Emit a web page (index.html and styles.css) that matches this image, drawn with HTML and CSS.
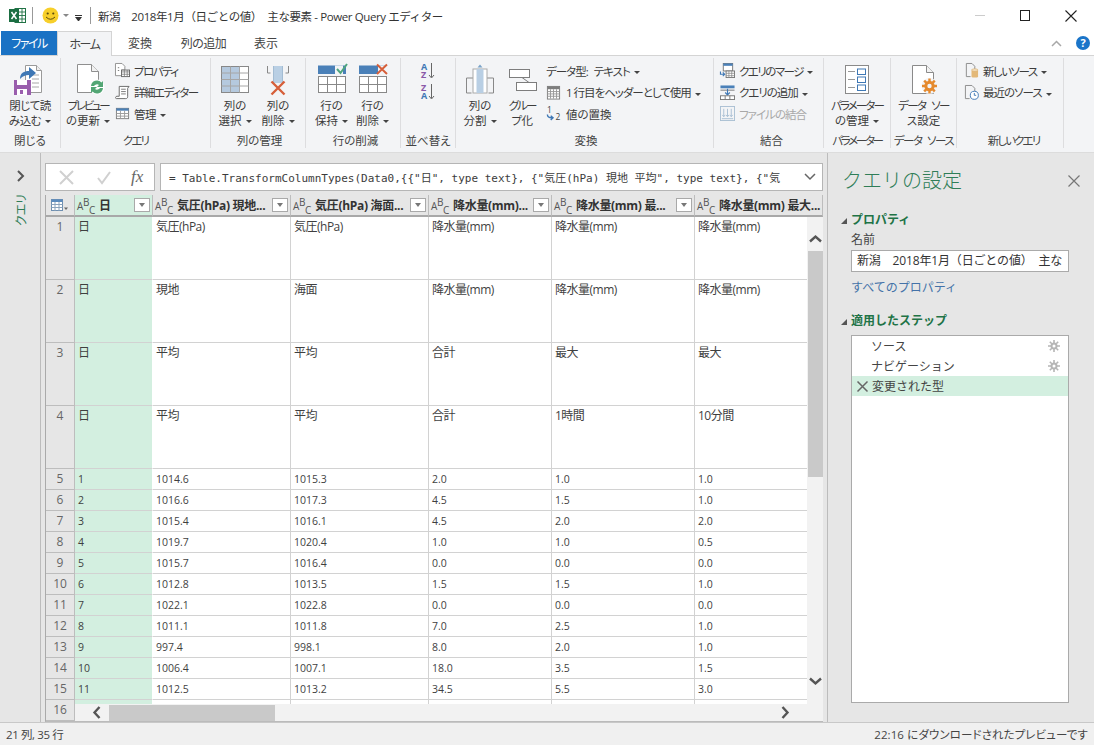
FILE: index.html
```html
<!DOCTYPE html>
<html lang="ja">
<head>
<meta charset="utf-8">
<title>Power Query エディター</title>
<link rel="stylesheet" href="styles.css">
</head>
<body>
<div class="app">
  <header class="titlebar">
    <svg class="tb-excel" width="17" height="17" viewBox="0 0 17 17"><rect x="6" y="1.5" width="10.5" height="14" fill="#fff" stroke="#217346"/><path d="M9 1.5v14M13 1.5v14M6 5h10M6 8.500h10M6 12h10" stroke="#217346" stroke-width=".9"/><rect x="0" y="2" width="10" height="13" fill="#1b6e42"/><path d="M2.500 5l5 7M7.500 5l-5 7" stroke="#fff" stroke-width="1.500"/></svg>
    <span class="tb-sep"></span>
    <svg class="tb-smile" width="17" height="17" viewBox="0 0 17 17"><circle cx="8.500" cy="8.500" r="8" fill="#f7cf2b"/><circle cx="5.700" cy="6.500" r="1.100" fill="#5a4a10"/><circle cx="11.300" cy="6.500" r="1.100" fill="#5a4a10"/><path d="M4 10q4.500 4.500 9 0" fill="none" stroke="#5a4a10" stroke-width="1"/></svg>
    <span class="caret caret-gray tb-c1"></span>
    <span class="tb-more"></span>
    <span class="tb-sep tb-sep2"></span>
    <span class="tb-title">新潟　2018年1月（日ごとの値）　主な要素 - Power Query エディター</span>
    <div class="winctl">
      <span class="win-min"></span>
      <span class="win-max"></span>
      <svg width="12" height="12" viewBox="0 0 12 12"><path d="M.5.500l11 11M11.500.500l-11 11" stroke="#222" stroke-width="1.100"/></svg>
    </div>
  </header>

  <nav class="tabs">
    <span class="tab tab-file ls15">ファイル</span>
    <span class="tab tab-home ls15">ホーム</span>
    <span class="tab tab-a">変換</span>
    <span class="tab tab-b ls05">列の追加</span>
    <span class="tab tab-c">表示</span>
    <div class="tabs-right">
      <svg width="11" height="7" viewBox="0 0 11 7"><path d="M1 6l4.500-4.500L10 6" fill="none" stroke="#a8a8a8" stroke-width="1.500"/></svg>
      <span class="help">?</span>
    </div>
  </nav>

  <section class="ribbon">
    <div class="group g-close">
      <div class="g-body">
        <div class="lg w60">
          <svg class="ico" viewBox="0 0 36 36"><path d="M13.500 3.500h11l5 5v22h-16z" fill="#fff" stroke="#9a9a9a"/><path d="M24.500 3.500v5h5" fill="#eee" stroke="#9a9a9a"/><path d="M20 13h7M20 17h7M20 21h7M20 25h7" stroke="#a8a8a8"/><rect x="2" y="18" width="17" height="15" fill="#9a5ead"/><rect x="5" y="18" width="10" height="5" fill="#fff"/><rect x="5" y="27" width="10" height="6" fill="#fff"/><rect x="8" y="28" width="3" height="4" fill="#9a5ead"/><path d="M8 17c0-6 4-8 9-8V5l7 6-7 6v-4c-4 0-6 1-9 4z" fill="#3f78b5"/></svg>
          <span class="lbl ls05">閉じて読<br>み込む<i class="caret"></i></span>
        </div>
      </div>
      <div class="g-name">閉じる</div>
    </div>

    <div class="group g-query">
      <div class="g-body">
        <div class="lg w55">
          <svg class="ico" viewBox="0 0 36 36"><path d="M7.500 2.500h14l7 7v21h-21z" fill="#fff" stroke="#8f8f8f"/><path d="M21.500 2.500v7h7" fill="#f2f2f2" stroke="#8f8f8f"/><circle cx="27" cy="25" r="7.500" fill="#fff"/><path d="M21 24a6 6 0 0 1 10.500-3.500l1.500-1.500v6h-6l2-2a3.500 3.500 0 0 0-5 1z" fill="#53a675"/><path d="M33 26a6 6 0 0 1-10.500 3.500L21 31v-6h6l-2 2a3.500 3.500 0 0 0 5-1z" fill="#53a675"/></svg>
          <span class="lbl"><span class="ls25">プレビュー</span><br>の更新<i class="caret"></i></span>
        </div>
        <div class="stack">
          <div class="sm"><svg class="sico" viewBox="0 0 16 16"><path d="M.5.500h7l3 3v4H7v6H.5z" fill="#fff" stroke="#8f8f8f"/><path d="M3 5h1.500M3 8h1.500" stroke="#777"/><rect x="7" y="7.500" width="8.500" height="7" fill="#fff" stroke="#666"/><path d="M7 9.500h8.500M7 12h8.500M10 7.500v7M13 7.500v7" stroke="#777" stroke-width=".8"/></svg><span class="ls15">プロパティ</span></div>
          <div class="sm"><svg class="sico" viewBox="0 0 16 16"><path d="M4.500 1.500h10.500l-1.500 2v9c0 1-.5 2-2 2H1.500c-1.500 0-1-2.500.5-2.500h2.500z" fill="#fff" stroke="#666"/><path d="M6.500 4.500h5M6.500 7h5M6.500 9.500h5" stroke="#777"/></svg><span class="ls15">詳細エディター</span></div>
          <div class="sm"><svg class="sico" viewBox="0 0 16 16"><rect x="1.500" y="2.500" width="13" height="11" fill="#fff" stroke="#7d7d7d"/><rect x="1.500" y="2.500" width="13" height="2.500" fill="#4a7fb5"/><path d="M1.500 8h13M1.500 10.800h13M5.800 5v8.500M10.200 5v8.500" stroke="#9a9a9a"/></svg><span class="ls05">管理<i class="caret"></i></span></div>
        </div>
      </div>
      <div class="g-name ls2">クエリ</div>
    </div>

    <div class="group g-cols">
      <div class="g-body">
        <div class="lg w42">
          <svg class="ico" viewBox="0 0 36 36"><rect x="4.500" y="4.500" width="27" height="26" fill="#fff" stroke="#888"/><rect x="5" y="5" width="17" height="25" fill="#b5c9de"/><path d="M4.500 11h27M4.500 17.500h27M4.500 24h27M13.500 4.500v26M22.500 4.500v26" stroke="#a6a6a6"/></svg>
          <span class="lbl">列の<br>選択<i class="caret"></i></span>
        </div>
        <div class="lg w42 ml1">
          <svg class="ico" viewBox="0 0 36 36"><path d="M7.500 4v7h3M28.500 4v7h-3" fill="none" stroke="#888"/><rect x="13.500" y="4" width="9" height="17" fill="#b9cfe4"/><path d="M13.500 4v17M22.500 4v17" stroke="#a3bcd3"/><path d="M11.500 19.500l13 13M24.500 19.500l-13 13" stroke="#d65f3a" stroke-width="2.400"/></svg>
          <span class="lbl">列の<br>削除<i class="caret"></i></span>
        </div>
      </div>
      <div class="g-name">列の管理</div>
    </div>

    <div class="group g-rows">
      <div class="g-body">
        <div class="lg w41">
          <svg class="ico" viewBox="0 0 36 36"><rect x="4" y="3.500" width="28" height="8.500" fill="#4a80b8"/><path d="M21 3.500h8v8.500h-8z" fill="#f3f4f6"/><path d="M23 7l3.500 4L33 2" fill="none" stroke="#4fa57f" stroke-width="2"/><rect x="4.500" y="14.500" width="27" height="16" fill="#fff" stroke="#888"/><path d="M4.500 22.500h27M13.500 14.500v16M22.500 14.500v16" stroke="#888"/></svg>
          <span class="lbl">行の<br>保持<i class="caret"></i></span>
        </div>
        <div class="lg w41">
          <svg class="ico" viewBox="0 0 36 36"><rect x="4" y="3.500" width="28" height="8.500" fill="#4a80b8"/><path d="M23 3.500h9v8.500h-9z" fill="#f3f4f6"/><path d="M22 2.500l10 9.500M32 2.500l-10 9.500" stroke="#d65f3a" stroke-width="2"/><rect x="4.500" y="14.500" width="27" height="16" fill="#fff" stroke="#888"/><path d="M4.500 22.500h27M13.500 14.500v16M22.500 14.500v16" stroke="#888"/></svg>
          <span class="lbl">行の<br>削除<i class="caret"></i></span>
        </div>
      </div>
      <div class="g-name">行の削減</div>
    </div>

    <div class="group g-sort">
      <div class="g-body">
        <div class="sortcol">
          <svg class="sort" viewBox="0 0 16 18"><text x="1" y="7.500" class="st st-a">A</text><text x="1" y="16" class="st st-z">Z</text><path d="M11.500 1v14M9 13l2.500 3 2.500-3" fill="none" stroke="#666"/></svg>
          <svg class="sort" viewBox="0 0 16 18"><text x="1" y="7.500" class="st st-z">Z</text><text x="1" y="16" class="st st-a">A</text><path d="M11.500 1v14M9 13l2.500 3 2.500-3" fill="none" stroke="#666"/></svg>
        </div>
      </div>
      <div class="g-name">並べ替え</div>
    </div>

    <div class="group g-trans">
      <div class="g-body">
        <div class="lg w42">
          <svg class="ico" viewBox="0 0 36 36"><path d="M4.500 31V16h8M31.500 31V16h-8M4.500 31h5M31.500 31h-5" fill="none" stroke="#888"/><rect x="11" y="7" width="14" height="24" fill="#fff" stroke="#aaa"/><rect x="14.500" y="7" width="7" height="24" fill="#b9cfe4"/><path d="M18 2.500l-2.500 3h5z" fill="#7ba3c8"/></svg>
          <span class="lbl">列の<br>分割<i class="caret"></i></span>
        </div>
        <div class="lg w42">
          <svg class="ico" viewBox="0 0 36 36"><rect x="5.500" y="7.500" width="20" height="8" fill="#fff" stroke="#7d7d7d"/><rect x="12.500" y="20.500" width="20" height="8" fill="#fff" stroke="#7d7d7d"/><path d="M18 15.500l7 5" stroke="#7d7d7d"/></svg>
          <span class="lbl"><span class="ls2">グルー</span><br><span class="ls05">プ化</span></span>
        </div>
        <div class="stack stack-trans">
          <div class="sm"><span class="ls1 wsp">データ型: テキスト<i class="caret"></i></span></div>
          <div class="sm"><svg class="sico" viewBox="0 0 16 16"><rect x="1.500" y="1.500" width="13" height="13.500" fill="#fff" stroke="#7d7d7d"/><rect x="1.500" y="1.500" width="13" height="3" fill="#7d7d7d"/><path d="M1.500 7h13M1.500 9.500h13M1.500 12h13M4.800 4.500v10M8 4.500v10M11.200 4.500v10" stroke="#999"/></svg><span class="lab-gap ls1">1 行目をヘッダーとして使用<i class="caret"></i></span></div>
          <div class="sm"><svg class="sico" viewBox="0 0 16 16"><text x="1" y="7" class="num">1</text><text x="10" y="15" class="num">2</text><path d="M1.500 9c0 2.500 2 3.500 5 3.500M5 10.300l2.500 2.200L5 14.800" fill="none" stroke="#3f78b5" stroke-width="1.500"/></svg><span class="lab-gap">値の置換</span></div>
        </div>
      </div>
      <div class="g-name">変換</div>
    </div>

    <div class="group g-merge">
      <div class="g-body">
        <div class="stack">
          <div class="sm"><svg class="sico" viewBox="0 0 16 16"><rect x="3.500" y=".5" width="10" height="8" fill="#fff" stroke="#777"/><rect x="3.500" y=".5" width="10" height="2.500" fill="#4a80b8"/><rect x="6.500" y="8.500" width="9" height="7" fill="#fff" stroke="#777"/><path d="M6.500 11h9M6.500 13.500h9M9.500 8.500v7M12.500 8.500v7" stroke="#888" stroke-width=".8"/><path d="M.5 9v3h4M3 10l2 2-2 2" fill="none" stroke="#3f78b5" stroke-width="1.200"/></svg><span class="ls15">クエリのマージ<i class="caret"></i></span></div>
          <div class="sm"><svg class="sico" viewBox="0 0 16 16"><rect x=".5" y=".5" width="15" height="3" fill="#4a80b8"/><path d="M.5 5.500h15" stroke="#777"/><path d="M8 4v6M5.500 8l2.500 2.500L10.500 8" fill="none" stroke="#3f78b5" stroke-width="1.200"/><rect x=".5" y="11.500" width="15" height="4" fill="#fff" stroke="#777"/><path d="M5.500 11.500v4M10.500 11.500v4" stroke="#777"/></svg><span class="ls1">クエリの追加<i class="caret"></i></span></div>
          <div class="sm sm-off"><svg class="sico" viewBox="0 0 16 16"><rect x=".5" y=".5" width="15" height="15" fill="none" stroke="#a9bfd3"/><path d="M4 3v8M2.500 9.500L4 11.500l1.500-2M8 3v8M6.500 9.500L8 11.500l1.500-2M12 3v8M10.500 9.500l1.500 2 1.500-2M2 13.500h12" fill="none" stroke="#a9bfd3"/></svg><span class="ls1">ファイルの結合</span></div>
        </div>
      </div>
      <div class="g-name">結合</div>
    </div>

    <div class="group g-param">
      <div class="g-body">
        <div class="lg wfull">
          <svg class="ico" viewBox="0 0 36 36"><rect x="6.500" y="3.500" width="23" height="28" fill="#fff" stroke="#8a8a8a"/><path d="M9 9.500h7M9 17.500h7M9 25.500h7" stroke="#999"/><rect x="18.500" y="7" width="8" height="5.500" fill="#fff" stroke="#3f78b5"/><rect x="18.500" y="15" width="8" height="5.500" fill="#fff" stroke="#3f78b5"/><rect x="18.500" y="23" width="8" height="5.500" fill="#fff" stroke="#3f78b5"/></svg>
          <span class="lbl"><span class="ls2">パラメーター</span><br>の管理<i class="caret"></i></span>
        </div>
      </div>
      <div class="g-name ls25">パラメーター</div>
    </div>

    <div class="group g-source">
      <div class="g-body">
        <div class="lg wfull">
          <svg class="ico" viewBox="0 0 36 36"><path d="M6.500 3.500h14l7 7v21h-21z" fill="#fff" stroke="#8a8a8a"/><path d="M20.500 3.500v7h7" fill="#f2f2f2" stroke="#8a8a8a"/><circle cx="23.500" cy="24" r="8" fill="#f3f4f6"/><circle cx="23.500" cy="24" r="3.700" fill="none" stroke="#e58a2e" stroke-width="3"/><path d="M23.500 16.500v3M23.500 28.500v3M16 24h3M28 24h3M18.200 18.700l2 2M26.800 27.300l2 2M28.800 18.700l-2 2M20.200 27.300l-2 2" stroke="#e58a2e" stroke-width="2.400"/></svg>
          <span class="lbl"><span class="ls15 wsp">データ ソー</span><br>ス設定</span>
        </div>
      </div>
      <div class="g-name ls15 wsp">データ ソース</div>
    </div>

    <div class="group g-new">
      <div class="g-body">
        <div class="stack">
          <div class="sm"><svg class="sico" viewBox="0 0 16 16"><path d="M2.500.5h6l3 3v3" fill="none" stroke="#8a8a8a"/><path d="M2.500.5v14H7" fill="none" stroke="#8a8a8a"/><rect x="8" y="7.500" width="7" height="8" rx="1.500" fill="#e3b878"/><ellipse cx="11.500" cy="7.500" rx="3.500" ry="1.300" fill="#f5e2c2" stroke="#d4a662" stroke-width=".6"/></svg><span class="ls15">新しいソース<i class="caret"></i></span></div>
          <div class="sm"><svg class="sico" viewBox="0 0 16 16"><path d="M1.500.5h7l3 3v3M1.500.5v14H6" fill="none" stroke="#8a8a8a"/><circle cx="11" cy="11" r="4.300" fill="#fff" stroke="#3f78b5"/><path d="M11 8.500V11h2" fill="none" stroke="#3f78b5"/></svg><span class="ls1">最近のソース<i class="caret"></i></span></div>
        </div>
      </div>
      <div class="g-name ls2">新しいクエリ</div>
    </div>
  </section>

  <main class="main">
    <aside class="nav">
      <svg width="8" height="12" viewBox="0 0 8 12"><path d="M1 1l5 5-5 5" fill="none" stroke="#555" stroke-width="2"/></svg>
      <span class="nav-label">クエリ</span>
    </aside>

    <div class="center">
      <div class="formula">
        <div class="f-btns">
          <svg width="17" height="17" viewBox="0 0 17 17"><path d="M2 2l13 13M15 2L2 15" stroke="#d0d0d0" stroke-width="2"/></svg>
          <svg width="16" height="17" viewBox="0 0 16 17"><path d="M2 9l4 5 8-11" fill="none" stroke="#d0d0d0" stroke-width="2"/></svg>
          <span class="fx">fx</span>
        </div>
        <div class="f-input">
          <span class="f-text">= Table.TransformColumnTypes(Data0,{{"日", type text}, {"気圧(hPa) 現地 平均", type text}, {"気</span>
          <svg width="12" height="8" viewBox="0 0 12 8"><path d="M1 1l5 5 5-5" fill="none" stroke="#666" stroke-width="1.500"/></svg>
        </div>
      </div>

      <div class="grid-wrap">
        <table class="grid">
          <colgroup><col class="c0"><col class="c1"><col class="c2"><col class="c2"><col class="c4"><col class="c5"><col class="c6"></colgroup>
          <thead>
            <tr>
              <th class="corner"><svg width="17" height="13" viewBox="0 0 17 13"><rect x=".5" y=".5" width="11" height="11" fill="#fff" stroke="#6f8fb0"/><rect x=".5" y=".5" width="11" height="2.500" fill="#5b8bbd"/><path d="M.5 5.500h11M.5 8.500h11M4 3v9M8 3v9" stroke="#8aa3bc"/><path d="M13 8.500h4l-2 2.500z" fill="#666"/></svg></th>
              <th class="sel"><div class="hd"><span class="abc">A<sup>B</sup><sub>C</sub></span><span class="hd-t">日</span><span class="dd"></span></div></th>
              <th><div class="hd"><span class="abc">A<sup>B</sup><sub>C</sub></span><span class="hd-t">気圧(hPa) 現地...</span><span class="dd"></span></div></th>
              <th><div class="hd"><span class="abc">A<sup>B</sup><sub>C</sub></span><span class="hd-t">気圧(hPa) 海面...</span><span class="dd"></span></div></th>
              <th><div class="hd"><span class="abc">A<sup>B</sup><sub>C</sub></span><span class="hd-t">降水量(mm)...</span><span class="dd"></span></div></th>
              <th><div class="hd"><span class="abc">A<sup>B</sup><sub>C</sub></span><span class="hd-t">降水量(mm) 最...</span><span class="dd"></span></div></th>
              <th><div class="hd"><span class="abc">A<sup>B</sup><sub>C</sub></span><span class="hd-t">降水量(mm) 最大...</span></div></th>
            </tr>
          </thead>
          <tbody>
            <tr class="tall"><th>1</th><td class="sel">日</td><td>気圧(hPa)</td><td>気圧(hPa)</td><td>降水量(mm)</td><td>降水量(mm)</td><td>降水量(mm)</td></tr>
            <tr class="tall"><th>2</th><td class="sel">日</td><td>現地</td><td>海面</td><td>降水量(mm)</td><td>降水量(mm)</td><td>降水量(mm)</td></tr>
            <tr class="tall"><th>3</th><td class="sel">日</td><td>平均</td><td>平均</td><td>合計</td><td>最大</td><td>最大</td></tr>
            <tr class="tall"><th>4</th><td class="sel">日</td><td>平均</td><td>平均</td><td>合計</td><td>1時間</td><td>10分間</td></tr>
            <tr><th>5</th><td class="sel">1</td><td>1014.6</td><td>1015.3</td><td>2.0</td><td>1.0</td><td>1.0</td></tr>
            <tr><th>6</th><td class="sel">2</td><td>1016.6</td><td>1017.3</td><td>4.5</td><td>1.5</td><td>1.0</td></tr>
            <tr><th>7</th><td class="sel">3</td><td>1015.4</td><td>1016.1</td><td>4.5</td><td>2.0</td><td>2.0</td></tr>
            <tr><th>8</th><td class="sel">4</td><td>1019.7</td><td>1020.4</td><td>1.0</td><td>1.0</td><td>0.5</td></tr>
            <tr><th>9</th><td class="sel">5</td><td>1015.7</td><td>1016.4</td><td>0.0</td><td>0.0</td><td>0.0</td></tr>
            <tr><th>10</th><td class="sel">6</td><td>1012.8</td><td>1013.5</td><td>1.5</td><td>1.5</td><td>1.0</td></tr>
            <tr><th>11</th><td class="sel">7</td><td>1022.1</td><td>1022.8</td><td>0.0</td><td>0.0</td><td>0.0</td></tr>
            <tr><th>12</th><td class="sel">8</td><td>1011.1</td><td>1011.8</td><td>7.0</td><td>2.5</td><td>1.0</td></tr>
            <tr><th>13</th><td class="sel">9</td><td>997.4</td><td>998.1</td><td>8.0</td><td>2.0</td><td>1.0</td></tr>
            <tr><th>14</th><td class="sel">10</td><td>1006.4</td><td>1007.1</td><td>18.0</td><td>3.5</td><td>1.5</td></tr>
            <tr><th>15</th><td class="sel">11</td><td>1012.5</td><td>1013.2</td><td>34.5</td><td>5.5</td><td>3.0</td></tr>
            <tr><th>16</th><td class="sel"></td><td></td><td></td><td></td><td></td><td></td></tr>
          </tbody>
        </table>
        <div class="vscroll">
          <svg width="13" height="9" viewBox="0 0 13 9"><path d="M1 7.500l5.500-5 5.500 5" fill="none" stroke="#555" stroke-width="2.400"/></svg>
          <span class="v-thumb"></span>
          <svg class="v-down" width="13" height="9" viewBox="0 0 13 9"><path d="M1 1.500l5.500 5 5.500-5" fill="none" stroke="#555" stroke-width="2.400"/></svg>
        </div>
        <div class="hscroll">
          <svg width="9" height="13" viewBox="0 0 9 13"><path d="M7.500 1l-5 5.500 5 5.500" fill="none" stroke="#555" stroke-width="2.400"/></svg>
          <span class="h-thumb"></span>
          <svg class="h-right" width="9" height="13" viewBox="0 0 9 13"><path d="M1.500 1l5 5.500-5 5.500" fill="none" stroke="#555" stroke-width="2.400"/></svg>
        </div>
      </div>
    </div>

    <aside class="settings">
      <div class="s-head">
        <h1 class="s-title">クエリの設定</h1>
        <svg width="12" height="12" viewBox="0 0 12 12"><path d="M.5.500l11 11M11.500.500l-11 11" stroke="#777" stroke-width="1.200"/></svg>
      </div>
      <h2 class="s-sec"><i class="tri"></i>プロパティ</h2>
      <div class="s-label">名前</div>
      <div class="s-input">新潟　2018年1月（日ごとの値）　主な</div>
      <a class="s-link">すべてのプロパティ</a>
      <h2 class="s-sec s-sec2"><i class="tri"></i>適用したステップ</h2>
      <ul class="steps">
        <li><span class="st-name">ソース</span><svg class="gear" width="12" height="12" viewBox="0 0 12 12"><circle cx="6" cy="6" r="2.500" fill="none" stroke="#b5b5b5" stroke-width="2"/><path d="M6 0v3M6 9v3M0 6h3M9 6h3M1.800 1.800l2 2M8.200 8.200l2 2M10.200 1.800l-2 2M3.800 8.200l-2 2" stroke="#b5b5b5" stroke-width="1.600"/></svg></li>
        <li><span class="st-name">ナビゲーション</span><svg class="gear" width="12" height="12" viewBox="0 0 12 12"><circle cx="6" cy="6" r="2.500" fill="none" stroke="#b5b5b5" stroke-width="2"/><path d="M6 0v3M6 9v3M0 6h3M9 6h3M1.800 1.800l2 2M8.200 8.200l2 2M10.200 1.800l-2 2M3.800 8.200l-2 2" stroke="#b5b5b5" stroke-width="1.600"/></svg></li>
        <li class="active"><svg class="del" width="11" height="11" viewBox="0 0 11 11"><path d="M.5.500l10 10M10.500.500l-10 10" stroke="#666" stroke-width="1.500"/></svg><span class="st-name">変更された型</span></li>
      </ul>
    </aside>
  </main>

  <footer class="status">
    <span class="st-left">21 列, 35 行</span>
    <span class="st-right">22:16 にダウンロードされたプレビューです</span>
  </footer>
</div>
</body>
</html>
```
FILE: styles.css
```css
* { box-sizing: border-box; }
html, body { margin: 0; padding: 0; }
body {
  font-family: "Open Sans", "Noto Sans CJK JP", sans-serif;
  font-size: 12px;
  color: #3c3c3c;
  background: #fff;
  overflow: hidden;
  font-feature-settings: "palt";
}
.app { width: 1094px; height: 745px; display: flex; flex-direction: column; }
svg { overflow: visible; }

/* tightened spacing: the original UI face has condensed kana */
.ls05 { letter-spacing: -.5px; }
.ls1 { letter-spacing: -1px; }
.ls15 { letter-spacing: -1.500px; }
.ls2 { letter-spacing: -1.900px; }
.ls25 { letter-spacing: -2.300px; }
.wsp { word-spacing: 4px; }

/* title bar */
.titlebar { height: 31px; flex: none; display: flex; align-items: center; background: #fff; padding-left: 9px; }
.tb-sep { width: 1px; height: 17px; background: #999; margin: 0 9px 0 6px; }
.tb-sep2 { margin: 0 7px 0 8px; }
.tb-c1 { margin-left: 5px; }
.tb-more { width: 7px; height: 5px; margin-left: 6px; margin-top: 3px; border-top: 1px solid #333; position: relative; }
.tb-more::after { content: ""; display: block; margin-top: 1px; border: 3.5px solid transparent; border-top: 4px solid #333; border-bottom: 0; }
.tb-title { font-size: 11.500px; color: #333; white-space: pre; font-feature-settings: normal; letter-spacing: -.4px; }
.winctl { margin-left: auto; display: flex; align-items: center; gap: 35px; padding-right: 17px; }
.win-min { width: 10px; height: 1px; background: #ccc; }
.win-max { width: 10px; height: 11px; border: 1.500px solid #222; }

/* tabs */
.tabs { height: 24px; flex: none; display: flex; align-items: stretch; padding-left: 1px; background: #fff; position: relative; z-index: 1; }
.tab { display: flex; align-items: center; justify-content: center; font-size: 12px; color: #444; }
.tab-file { width: 56px; background: #1a72c4; color: #fff; }
.tab-home { width: 55px; background: #f3f4f6; border: 1px solid #d4d4d4; border-bottom: 0; height: 25px; }
.tab-a { width: 56px; }
.tab-b { width: 71px; }
.tab-c { width: 50px; margin-left: 2px; }
.tabs-right { margin-left: auto; display: flex; align-items: center; gap: 14px; padding-right: 4px; }
.help { width: 14px; height: 14px; border-radius: 50%; background: #1b75c9; color: #fff; font: bold 11px/14px "Open Sans", sans-serif; text-align: center; }

/* ribbon */
.ribbon { height: 98px; flex: none; display: flex; background: #f3f4f6; border-top: 1px solid #d4d4d4; border-bottom: 1px solid #dcdcdc; padding-top: 2px; }
.group { height: 90px; display: flex; flex-direction: column; border-right: 1px solid #dddddf; flex: none; }
.g-body { flex: 1; display: flex; min-height: 0; }
.g-name { height: 14px; line-height: 14px; text-align: center; font-size: 11.500px; color: #444; white-space: nowrap; }
.g-close { width: 61px; }
.g-query { width: 150px; }
.g-cols { width: 95px; padding-left: 3px; }
.g-rows { width: 95px; padding-left: 5px; }
.g-sort { width: 55px; }
.g-trans { width: 258px; padding-left: 3px; }
.g-merge { width: 110px; padding-left: 6px; }
.g-param { width: 67px; }
.g-source { width: 66px; }
.g-new { width: 107px; padding-left: 7px; }
.lg { display: flex; flex-direction: column; align-items: center; padding-top: 4px; flex: none; }
.w60 { width: 60px; }
.w55 { width: 54px; }
.w42 { width: 42px; }
.w41 { width: 41px; }
.ml1 { margin-left: 1px; }
.wfull { width: 100%; }
.ico { width: 36px; height: 36px; display: block; flex: none; }
.lbl { font-size: 11.500px; line-height: 15px; text-align: center; white-space: nowrap; color: #3c3c3c; }
.caret { display: inline-block; width: 0; height: 0; border: 3px solid transparent; border-top: 3px solid #444; border-bottom: 0; margin-left: 4px; vertical-align: middle; }
.caret-gray { border-top-color: #888; }
.stack { display: flex; flex-direction: column; padding-top: 2px; }
.stack-trans { padding-left: 3px; }
.sm { height: 21.500px; display: flex; align-items: center; gap: 4px; white-space: nowrap; font-size: 11.500px; color: #3c3c3c; }
.sm-off { color: #a8a8a8; }
.sico { width: 15px; height: 15px; flex: none; }
.lab-gap { margin-left: 1px; }
.num { font-size: 9px; fill: #444; font-family: "Open Sans", sans-serif; }
.sortcol { width: 100%; display: flex; flex-direction: column; align-items: center; padding-top: 4px; gap: 3px; }
.sort { width: 16px; height: 18px; display: block; }
.st { font: bold 9px "Open Sans", sans-serif; }
.st-a { fill: #3f78b5; }
.st-z { fill: #8a5aa8; }

/* main */
.main { flex: 1; min-height: 0; display: flex; background: #e6e6e6; }
.nav { width: 41px; flex: none; border-right: 1px solid #bcbcbc; display: flex; flex-direction: column; align-items: center; padding-top: 17px; padding-left: 1px; }
.nav-label { writing-mode: vertical-rl; text-orientation: sideways; transform: rotate(180deg); color: #2f7d57; font-size: 12px; margin-top: 12px; }
.center { width: 786px; flex: none; padding: 10px 4px 0; display: flex; flex-direction: column; }
.formula { height: 28px; flex: none; display: flex; gap: 5px; }
.f-btns { width: 110px; background: #fff; border: 1px solid #b5b5b5; display: flex; align-items: center; gap: 21px; padding-left: 12px; }
.fx { font: italic 17px "Liberation Serif", serif; color: #666; margin-left: -2px; }
.f-input { flex: 1; background: #fff; border: 1px solid #b5b5b5; display: flex; align-items: center; justify-content: space-between; padding: 0 6px 0 8px; }
.f-text { font: 11px "DejaVu Sans Mono", "Noto Sans CJK JP", monospace; font-feature-settings: normal; color: #3c3c3c; white-space: pre; }

/* grid */
.grid-wrap { margin-top: 4px; flex: 1; min-height: 0; position: relative; overflow: hidden; border-left: 1px solid #aaa; border-bottom: 1px solid #bbb; background: #fff; }
.grid { table-layout: fixed; width: 777px; border-collapse: separate; border-spacing: 0; }
.c0 { width: 29px; }
.c1 { width: 78px; }
.c2 { width: 138px; }
.c4 { width: 123px; }
.c5 { width: 143px; }
.c6 { width: 128px; }
.grid thead th { height: 22px; background: #e6e6e6; border-right: 1px solid #bdbdbd; border-bottom: 2px solid #a8a8a8; padding: 0; font-weight: bold; text-align: left; }
.grid thead th.sel { background: #d3efe0; }
.grid thead th.corner { padding-left: 5px; line-height: 0; }
.hd { display: flex; align-items: center; padding-left: 2px; height: 20px; white-space: nowrap; }
.abc { font-size: 10px; font-weight: normal; color: #555; width: 22px; flex: none; line-height: 10px; letter-spacing: -.4px; position: relative; top: 1px; }
.abc sup, .abc sub { font-size: 10px; line-height: 0; color: #555; }
.abc sup { vertical-align: 4px; }
.abc sub { vertical-align: -4px; }
.hd-t { flex: 1; font-size: 12px; color: #333; letter-spacing: -.3px; }
.dd { width: 16px; height: 14px; flex: none; background: #fff; border: 1px solid #a9a9a9; margin-right: 2px; display: flex; align-items: center; justify-content: center; }
.dd::after { content: ""; border: 3.500px solid transparent; border-top: 4px solid #777; border-bottom: 0; }
.grid tbody th { height: 21px; padding: 0; background: #e6e6e6; border-right: 1px solid #bdbdbd; border-bottom: 1px solid #bdbdbd; font-weight: normal; font-size: 12px; text-align: center; vertical-align: top; line-height: 20px; color: #666; }
.grid tbody td { height: 21px; padding: 0 3px; border-right: 1px solid #d2d2d2; border-bottom: 1px solid #d2d2d2; font-size: 10.500px; line-height: 20px; vertical-align: top; color: #3f3f3f; white-space: nowrap; overflow: hidden; }
.grid tbody td.sel { background: #d3efe0; border-right-color: #fff; }
.grid tr.tall th, .grid tr.tall td { height: 63px; }
.grid tr.tall td { font-size: 12px; letter-spacing: -.5px; }
.vscroll { position: absolute; top: 22px; right: 0; width: 16px; bottom: 0; background: #f2f2f2; display: flex; flex-direction: column; align-items: center; padding: 17px 0 35px; }
.v-thumb { width: 15px; height: 226px; background: #c9c9c9; margin-top: 8px; }
.v-down { margin-top: auto; }
.hscroll { position: absolute; left: 29px; right: 16px; bottom: 0; height: 17px; background: #f2f2f2; display: flex; align-items: center; padding-left: 17px; padding-right: 17px; }
.h-thumb { width: 166px; height: 16px; background: #c9c9c9; margin-left: 8px; }
.h-right { margin-left: auto; }

/* settings */
.settings { width: 267px; flex: none; border-left: 1px solid #bcbcbc; padding: 0 25px 0 23px; display: flex; flex-direction: column; font-feature-settings: normal; }
.s-head { display: flex; align-items: center; justify-content: space-between; height: 52px; margin-left: -9px; margin-right: -17px; padding-right: 6px; padding-top: 3px; }
.s-title { margin: 0; font-size: 20px; line-height: 28px; font-weight: 300; color: #2f7d57; }
.s-sec { margin: 6px 0 0; font-size: 12px; line-height: 18px; font-weight: bold; color: #217346; position: relative; }
.s-sec2 { margin-top: 15px; }
.tri { position: absolute; left: -10px; top: 7px; width: 0; height: 0; border-bottom: 6px solid #555; border-left: 6px solid transparent; }
.s-label { margin-top: 2px; line-height: 18px; color: #444; }
.s-input { margin-top: 1px; width: 218px; height: 22px; background: #fff; border: 1px solid #aaa; padding-left: 5px; line-height: 20px; color: #333; white-space: nowrap; overflow: hidden; letter-spacing: -.15px; }
.s-link { display: block; margin-top: 7px; line-height: 18px; color: #4472a8; }
.steps { list-style: none; margin: 5px 0 0; padding: 0; width: 218px; height: 368px; background: #fff; border: 1px solid #aaa; }
.steps li { height: 20px; display: flex; align-items: center; padding-left: 19px; padding-right: 8px; justify-content: space-between; color: #444; }
.steps li.active { background: #d3efe0; justify-content: flex-start; padding-left: 5px; gap: 4px; }
.gear { flex: none; }
.del { flex: none; }

/* status */
.status { height: 23px; flex: none; display: flex; align-items: center; justify-content: space-between; padding: 0 6px; background: #f0f0f0; border-top: 1px solid #c8c8c8; font-size: 11.500px; color: #444; }
.st-left { letter-spacing: -.4px; }
.st-right { letter-spacing: .1px; }
```
